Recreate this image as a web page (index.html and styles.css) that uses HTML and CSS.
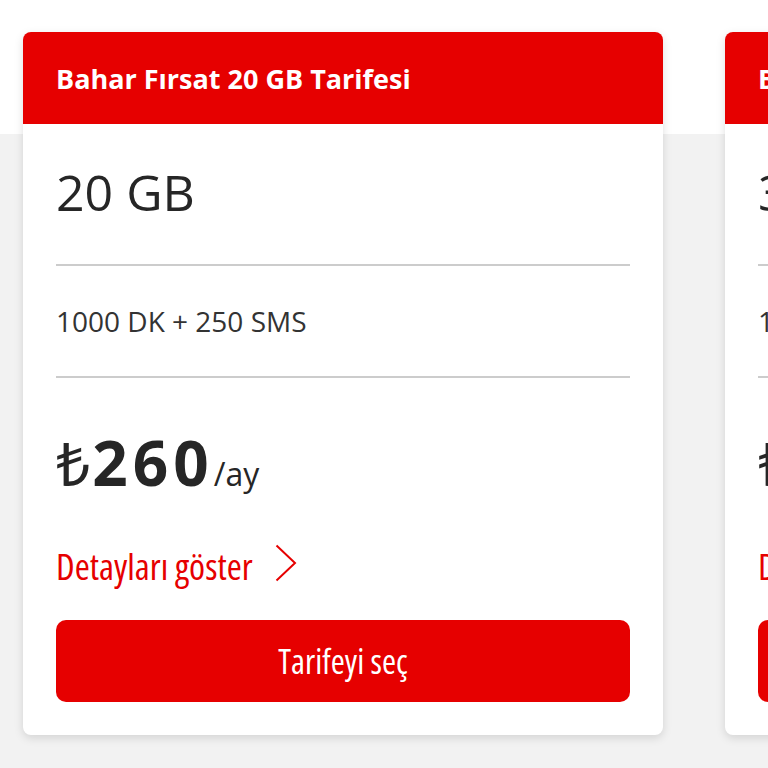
FILE: index.html
```html
<!DOCTYPE html>
<html lang="tr">
<head>
<meta charset="utf-8">
<link rel="stylesheet" href="styles.css">
</head>
<body>
<div class="page">
  <div class="cards">
    <div class="card">
      <div class="card-head">Bahar Fırsat 20 GB Tarifesi</div>
      <div class="card-body">
        <div class="size">20 GB</div>
        <div class="extras">1000 DK + 250 SMS</div>
        <div class="price"><span class="cur">₺</span><span class="amount">260</span><span class="per">/ay</span></div>
        <a class="details"><span class="details-text">Detayları göster</span>
          <svg class="chev" width="22" height="38" viewBox="0 0 22 38"><path d="M1.5 1.5 L20 19 L1.5 36.5" fill="none" stroke="#e60000" stroke-width="2"/></svg>
        </a>
        <button class="select">Tarifeyi seç</button>
      </div>
    </div>
    <div class="card">
      <div class="card-head">Bahar Fırsat 30 GB Tarifesi</div>
      <div class="card-body">
        <div class="size">30 GB</div>
        <div class="extras">1000 DK + 250 SMS</div>
        <div class="price"><span class="cur">₺</span><span class="amount">300</span><span class="per">/ay</span></div>
        <a class="details"><span class="details-text">Detayları göster</span>
          <svg class="chev" width="22" height="38" viewBox="0 0 22 38"><path d="M1.5 1.5 L20 19 L1.5 36.5" fill="none" stroke="#e60000" stroke-width="2"/></svg>
        </a>
        <button class="select">Tarifeyi seç</button>
      </div>
    </div>
  </div>
</div>
</body>
</html>
```
FILE: styles.css
```css
html, body {
  margin: 0;
  padding: 0;
}
body {
  font-family: "Open Sans", "Noto Sans", sans-serif;
  color: #333;
  background: #f2f2f2;
}
.page {
  width: 768px;
  height: 768px;
  overflow: hidden;
  background: linear-gradient(#ffffff 0, #ffffff 134px, #f2f2f2 134px);
}
.cards {
  display: flex;
  gap: 62px;
  padding: 32px 0 0 23px;
}
.card {
  flex: 0 0 640px;
  background: #fff;
  border-radius: 8px;
  box-shadow: 0 3px 10px rgba(0,0,0,0.13);
  overflow: hidden;
}
.card-head {
  height: 92px;
  background: #e60000;
  color: #fff;
  font-weight: 700;
  font-size: 27px;
  display: flex;
  align-items: center;
  padding: 0 33px;
  white-space: nowrap;
}
.card-body {
  padding: 0 33px 33px;
}
.size {
  font-size: 50px;
  line-height: 60px;
  padding: 38px 0 42px;
  border-bottom: 2px solid #cccccc;
  color: #262626;
  white-space: nowrap;
}
.extras {
  font-size: 28px;
  line-height: 40px;
  padding: 35px 0 35px;
  border-bottom: 2px solid #cccccc;
  white-space: nowrap;
}
.price {
  padding-top: 49px;
  font-size: 62px;
  line-height: 70px;
  font-weight: 700;
  color: #262626;
  white-space: nowrap;
}
.cur {
  font-size: 60px;
  font-weight: 400;
  line-height: 1;
  margin-right: 2px;
}
.amount {
  letter-spacing: 5px;
}
.per {
  font-size: 32px;
  font-weight: 400;
  line-height: 1;
}
.details {
  display: flex;
  align-items: flex-start;
  gap: 22px;
  color: #e60000;
  margin-top: 47px;
  height: 44px;
}
.details-text {
  font-size: 36.5px;
  font-stretch: 75%;
  line-height: 44px;
  white-space: nowrap;
}
.chev {
  display: block;
  flex: 0 0 auto;
}
.select {
  display: block;
  width: 100%;
  height: 82px;
  margin-top: 32px;
  border: 0;
  border-radius: 10px;
  background: #e60000;
  color: #fff;
  font-family: "Open Sans", "Noto Sans", sans-serif;
  font-size: 34px;
  font-stretch: 75%;
  padding: 0;
}
```
